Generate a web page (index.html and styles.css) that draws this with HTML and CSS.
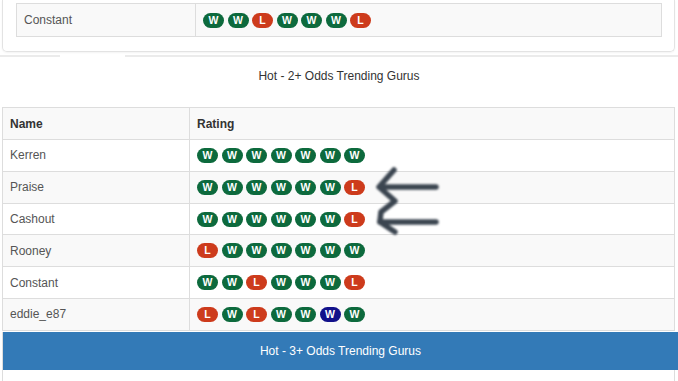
FILE: index.html
```html
<!DOCTYPE html>
<html lang="en">
<head>
    <meta charset="UTF-8">
    <meta name="viewport" content="width=device-width, initial-scale=1.0">
    <title>Trending Gurus</title>
    <link rel="stylesheet" href="styles.css">
</head>
<body>

<!-- Tail end of the previous box -->
<div class="panel panel-prev">
    <table class="gurus gurus-prev">
        <tr class="striped">
            <td class="col-name">Constant</td>
            <td>
                <span class="badge win">W</span><span class="badge win">W</span><span class="badge loss">L</span><span class="badge win">W</span><span class="badge win">W</span><span class="badge win">W</span><span class="badge loss">L</span>
            </td>
        </tr>
    </table>
</div>

<div class="divider">
    <span class="divider-line short"></span>
    <span class="divider-gap"></span>
    <span class="divider-line"></span>
</div>

<h3 class="section-title">Hot - 2+ Odds Trending Gurus</h3>

<div class="table-wrap">
    <table class="gurus">
        <tr class="striped">
            <th class="col-name">Name</th>
            <th>Rating</th>
        </tr>
        <tr>
            <td>Kerren</td>
            <td><span class="badge win">W</span><span class="badge win">W</span><span class="badge win">W</span><span class="badge win">W</span><span class="badge win">W</span><span class="badge win">W</span><span class="badge win">W</span></td>
        </tr>
        <tr class="striped">
            <td>Praise</td>
            <td><span class="badge win">W</span><span class="badge win">W</span><span class="badge win">W</span><span class="badge win">W</span><span class="badge win">W</span><span class="badge win">W</span><span class="badge loss">L</span></td>
        </tr>
        <tr>
            <td>Cashout</td>
            <td><span class="badge win">W</span><span class="badge win">W</span><span class="badge win">W</span><span class="badge win">W</span><span class="badge win">W</span><span class="badge win">W</span><span class="badge loss">L</span></td>
        </tr>
        <tr class="striped">
            <td>Rooney</td>
            <td><span class="badge loss">L</span><span class="badge win">W</span><span class="badge win">W</span><span class="badge win">W</span><span class="badge win">W</span><span class="badge win">W</span><span class="badge win">W</span></td>
        </tr>
        <tr>
            <td>Constant</td>
            <td><span class="badge win">W</span><span class="badge win">W</span><span class="badge loss">L</span><span class="badge win">W</span><span class="badge win">W</span><span class="badge win">W</span><span class="badge loss">L</span></td>
        </tr>
        <tr class="striped">
            <td>eddie_e87</td>
            <td><span class="badge loss">L</span><span class="badge win">W</span><span class="badge loss">L</span><span class="badge win">W</span><span class="badge win">W</span><span class="badge void">W</span><span class="badge win">W</span></td>
        </tr>
    </table>

    <!-- hand-drawn arrows pointing at Praise and Cashout -->
    <svg class="arrows" width="80" height="80" viewBox="0 0 80 80">
        <g fill="none" stroke="#3b4550" stroke-width="5.5" stroke-linecap="round" stroke-linejoin="round">
            <path d="M8 26 L64 26"/>
            <path d="M22 9 L7 26 L23 40 L9 51 L8 60"/>
            <path d="M8 61 L64 61"/>
            <path d="M8 61 L23 71"/>
        </g>
    </svg>
</div>

<div class="panel-blue">
    <div class="panel-heading">Hot - 3+ Odds Trending Gurus</div>
    <div class="panel-body"></div>
</div>

</body>
</html>
```

FILE: styles.css
```css
* {
    box-sizing: border-box;
}

body {
    margin: 0;
    font-family: "Liberation Sans", Arial, sans-serif;
    font-size: 12px;
    color: #555;
    background-color: #fff;
}

/* Boxes */
.panel-prev {
    margin: 0 3px 0 2px;
    padding: 3px 12px 14px 13px;
    border: 1px solid #e3e3e3;
    border-top: none;
    border-radius: 0 0 5px 5px;
    box-shadow: 0 1px 2px rgba(0, 0, 0, 0.05);
}

.divider {
    display: flex;
    margin-top: 3px;
    height: 2px;
}

.divider-line {
    flex: 1;
    background-color: #ebebeb;
}

.divider-line.short {
    flex: 0 0 60px;
}

.divider-gap {
    flex: 0 0 65px;
}

.section-title {
    margin: 10px 0 22px;
    font-size: 12px;
    font-weight: normal;
    line-height: 18px;
    text-align: center;
    color: #333;
}

/* Rating tables */
.table-wrap {
    position: relative;
    margin: 0 3px 1px 2px;
}

.gurus {
    width: 100%;
    border-collapse: collapse;
    border: 1px solid #ddd;
}

.gurus th,
.gurus td {
    height: 31.8px;
    padding: 0 7px;
    border: 1px solid #ddd;
    text-align: left;
    vertical-align: middle;
}

.gurus th {
    height: 32px;
    font-weight: bold;
    color: #333;
}

.gurus .col-name {
    width: 187px;
}

.gurus-prev .col-name {
    width: 179px;
}

.gurus-prev td {
    height: 33px;
}

.striped {
    background-color: #f9f9f9;
}

/* W / L pills */
.badge {
    display: inline-block;
    width: 21px;
    height: 15px;
    margin-right: 3.5px;
    border-radius: 8px;
    font-size: 10.5px;
    font-weight: bold;
    line-height: 15px;
    text-align: center;
    color: #fff;
    vertical-align: middle;
}

.badge.win {
    background-color: #0d6a3d;
}

.badge.loss {
    background-color: #cd3b1c;
}

.badge.void {
    background-color: #12118a;
}

.arrows {
    position: absolute;
    left: 370px;
    top: 54px;
    filter: blur(1px);
}

/* Blue box below */
.panel-blue {
    margin: 0 0 0 2px;
    border-left: 1px solid #ddd;
}

.panel-heading {
    height: 38px;
    line-height: 38px;
    background-color: #337ab7;
    color: #fff;
    text-align: center;
    font-size: 12px;
}

.panel-body {
    height: 20px;
    border-right: 1px solid #ddd;
    margin-right: 3px;
}
```
